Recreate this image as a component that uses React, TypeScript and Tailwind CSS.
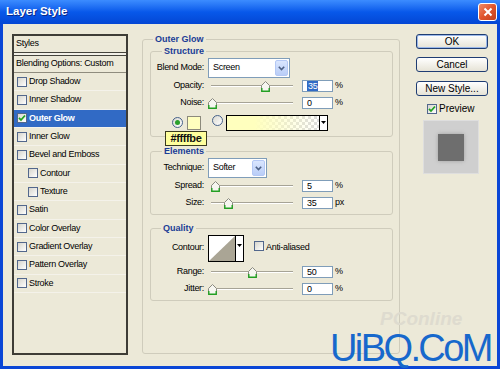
import React from "react";

const CheckMark = () => (
  <svg width="8" height="8" viewBox="0 0 8 8">
    <path d="M1 3.8 L3 6 L7 1.5" fill="none" stroke="#21a121" strokeWidth="1.8" />
  </svg>
);

function Box({ checked }: { checked?: boolean }) {
  return (
    <span className="inline-flex items-center justify-center w-[10px] h-[10px] border border-[#52678c] bg-linear-to-br from-[#d6d5cd] to-white shrink-0">
      {checked && <CheckMark />}
    </span>
  );
}

function Radio({ checked }: { checked?: boolean }) {
  return (
    <span className="inline-flex items-center justify-center w-[11px] h-[11px] rounded-full border border-[#46628a] bg-linear-to-br from-[#d9d8d0] to-white shrink-0">
      {checked && <span className="w-[5px] h-[5px] rounded-full bg-[#2aa02a]" />}
    </span>
  );
}

function Thumb() {
  return (
    <svg width="9" height="11" viewBox="0 0 9 11">
      <path d="M0.5 4.5 L4.5 0.5 L8.5 4.5 L8.5 10.5 L0.5 10.5 Z" fill="#f6f6f0" stroke="#8a8a80" />
      <path d="M0.8 7 L0.8 10.2 L8.2 10.2 L8.2 7" fill="none" stroke="#22a022" strokeWidth="1.4" />
    </svg>
  );
}

function Slider({ at }: { at: number }) {
  return (
    <div className="relative w-[82px] h-[12px] ml-[7px] shrink-0">
      <div className="absolute left-0 right-0 top-[5px] h-[2px] border-t border-[#a6a396] border-b border-b-white" />
      <div className="absolute top-[1px]" style={{ left: at - 4.5 }}>
        <Thumb />
      </div>
    </div>
  );
}

function Input({ value, selected }: { value: string; selected?: boolean }) {
  return (
    <div className="w-[31px] h-[12px] ml-[9px] bg-white border border-[#7f9db9] flex items-center pl-[4px] text-[9px] leading-[10px] shrink-0">
      {selected ? <span className="bg-[#316ac5] text-white px-[1px]">{value}</span> : value}
    </div>
  );
}

function Arrow() {
  return (
    <div className="w-[13px] h-[16px] mr-[1px] rounded-[2px] border border-[#b4c8f5] bg-linear-to-b from-[#dae6fe] to-[#b9cdf7] flex items-center justify-center shrink-0">
      <svg width="7" height="5" viewBox="0 0 7 5">
        <path d="M0.8 0.8 L3.5 3.6 L6.2 0.8" fill="none" stroke="#4d6185" strokeWidth="1.6" />
      </svg>
    </div>
  );
}

function Select({ text, wide }: { text: string; wide?: boolean }) {
  return (
    <div
      className={`ml-[4px] h-[20px] bg-white border border-[#7f9db9] flex items-center shrink-0 ${
        wide ? "w-[82px]" : "w-[59px]"
      }`}
    >
      <span className="flex-1 pl-[4px] text-[9px]">{text}</span>
      <Arrow />
    </div>
  );
}

function Label({ children }: { children: React.ReactNode }) {
  return <span className="w-[53px] text-right shrink-0">{children}</span>;
}

function SliderRow({
  label,
  at,
  value,
  unit,
  selected,
  mt,
}: {
  label: string;
  at: number;
  value: string;
  unit: string;
  selected?: boolean;
  mt: string;
}) {
  return (
    <div className={`flex items-center h-[12px] ${mt}`}>
      <Label>{label}</Label>
      <Slider at={at} />
      <Input value={value} selected={selected} />
      <span className="ml-[2px]">{unit}</span>
    </div>
  );
}

const items: { label: string; active?: boolean; indent?: boolean }[] = [
  { label: "Drop Shadow" },
  { label: "Inner Shadow" },
  { label: "Outer Glow", active: true },
  { label: "Inner Glow" },
  { label: "Bevel and Emboss" },
  { label: "Contour", indent: true },
  { label: "Texture", indent: true },
  { label: "Satin" },
  { label: "Color Overlay" },
  { label: "Gradient Overlay" },
  { label: "Pattern Overlay" },
  { label: "Stroke" },
];

export default function App() {
  return (
    <div className="w-[500px] h-[369px] bg-[#0a46d6] flex flex-col overflow-hidden relative font-['Liberation_Sans',Arial,sans-serif] text-[9px] tracking-[-0.3px] text-black">
      {/* Title bar */}
      <div className="h-[24px] shrink-0 flex items-center bg-linear-to-b from-[#3c8cff] via-[#0858ea] to-[#0446d4] pl-[6px] pr-[3px]">
        <span className="text-white font-bold text-[11.5px] tracking-normal [text-shadow:1px_1px_0_#0a2a8a] flex-1">
          Layer Style
        </span>
        <div className="w-[19px] h-[18px] rounded-[3px] border border-white bg-linear-to-br from-[#f08a66] via-[#e0552c] to-[#c2401e] flex items-center justify-center">
          <svg width="10" height="10" viewBox="0 0 10 10">
            <path d="M1.5 1.5 L8.5 8.5 M8.5 1.5 L1.5 8.5" stroke="white" strokeWidth="2" />
          </svg>
        </div>
      </div>

      {/* Body */}
      <div className="flex-1 mx-[3px] mb-[3px] bg-[#ece9d8] flex pl-[9px] pt-[9px]">
        {/* Styles list */}
        <div className="w-[116px] h-[321px] mt-[1px] border-2 border-[#3e3d37] bg-[#ece9d8] flex flex-col shrink-0">
          <div className="h-[16px] flex items-center pl-[2px] shrink-0">Styles</div>
          <div className="h-[4px] border-y border-[#45443c] bg-[#f3f1e8] shrink-0" />
          <div className="h-[16px] flex items-center pl-[2px] border-b border-[#8f8c7e] box-content shrink-0">
            Blending Options: Custom
          </div>
          {items.map((it) => (
            <div
              key={it.label}
              className={`h-[18.33px] shrink-0 flex items-center gap-[1px] border-b border-[#f4f2ea] ${
                it.indent ? "pl-[14px]" : "pl-[3px]"
              } ${it.active ? "bg-[#316ac5] text-white font-bold" : ""}`}
            >
              <Box checked={it.active} />
              <span className="ml-[1px]">{it.label}</span>
            </div>
          ))}
        </div>

        {/* Main panel */}
        <fieldset className="ml-[14px] w-[258px] h-[321px] border border-[#cfccbc] rounded-[3px] pl-[7px] pr-[6px] shrink-0">
          <legend className="ml-[3px] px-[2px] text-[9px] leading-[12px] font-bold tracking-normal text-[#1a3c96]">
            Outer Glow
          </legend>

          {/* Structure */}
          <fieldset className="relative border border-[#cfccbc] rounded-[3px] pb-[5px]">
            <legend className="ml-[11px] px-[2px] leading-[12px] font-bold tracking-normal text-[#1a3c96]">
              Structure
            </legend>
            <div className="flex items-center h-[20px] mt-[1px]">
              <Label>Blend Mode:</Label>
              <Select text="Screen" wide />
            </div>
            <SliderRow label="Opacity:" at={54} value="35" unit="%" selected mt="mt-[2px]" />
            <SliderRow label="Noise:" at={1} value="0" unit="%" mt="mt-[5px]" />
            <div className="relative flex items-center h-[16px] mt-[6px]">
              <span className="ml-[21px]">
                <Radio checked />
              </span>
              <span className="ml-[4px] w-[14px] h-[14px] border border-[#8c8a7c] bg-[#ffffbe] shrink-0" />
              <span className="ml-[11px]">
                <Radio />
              </span>
              <div className="ml-[3px] w-[102px] h-[16px] border border-black flex shrink-0">
                <div className="relative flex-1 bg-[repeating-conic-gradient(#dcdcdc_0_25%,#ffffff_0_50%)] bg-[length:6px_6px]">
                  <div className="absolute inset-0 bg-linear-to-r from-[#ffffbe] from-30% to-[#ffffbe]/0" />
                </div>
                <div className="w-[8px] border-l border-black bg-white flex items-start justify-center pt-[5px]">
                  <svg width="5" height="3" viewBox="0 0 5 3">
                    <path d="M0 0 L5 0 L2.5 3 Z" fill="#000" />
                  </svg>
                </div>
              </div>
              {/* tooltip */}
              <div className="absolute left-[14px] top-[16px] w-[42px] h-[15px] bg-[#ffff9c] border border-[#3a3a20] flex items-center justify-center text-[11px] tracking-[-0.4px] font-semibold text-[#111] z-10">
                #ffffbe
              </div>
            </div>
          </fieldset>

          {/* Elements */}
          <fieldset className="mt-[8px] border border-[#cfccbc] rounded-[3px] pb-[5px]">
            <legend className="ml-[11px] px-[2px] leading-[12px] font-bold tracking-normal text-[#1a3c96]">
              Elements
            </legend>
            <div className="flex items-center h-[20px] mt-[1px]">
              <Label>Technique:</Label>
              <Select text="Softer" />
            </div>
            <SliderRow label="Spread:" at={4} value="5" unit="%" mt="mt-[2px]" />
            <SliderRow label="Size:" at={17} value="35" unit="px" mt="mt-[5px]" />
          </fieldset>

          {/* Quality */}
          <fieldset className="mt-[7px] border border-[#cfccbc] rounded-[3px] pb-[5px]">
            <legend className="ml-[10px] px-[2px] leading-[12px] font-bold tracking-normal text-[#1a3c96]">
              Quality
            </legend>
            <div className="flex items-center h-[28px]">
              <Label>Contour:</Label>
              <div className="ml-[4px] w-[36px] h-[27px] border border-black flex bg-white shrink-0">
                <svg className="flex-1" width="26" height="25" viewBox="0 0 26 25" preserveAspectRatio="none">
                  <rect width="26" height="25" fill="#ffffff" />
                  <path d="M0 25 L26 0 L26 25 Z" fill="#aaa595" />
                </svg>
                <div className="w-[8px] border-l border-black bg-white flex items-start justify-center pt-[8px] shrink-0">
                  <svg width="5" height="3" viewBox="0 0 5 3">
                    <path d="M0 0 L5 0 L2.5 3 Z" fill="#000" />
                  </svg>
                </div>
              </div>
              <span className="ml-[10px]">
                <Box />
              </span>
              <span className="ml-[2px]">Anti-aliased</span>
            </div>
            <SliderRow label="Range:" at={41} value="50" unit="%" mt="mt-[4px]" />
            <SliderRow label="Jitter:" at={1} value="0" unit="%" mt="mt-[5px]" />
          </fieldset>
        </fieldset>

        {/* Right column */}
        <div className="ml-[16px] mt-[1px] w-[72px] flex flex-col shrink-0 text-[10px] tracking-normal">
          <div className="h-[15px] rounded-[3px] border border-[#1f3d73] bg-linear-to-b from-white to-[#e6e3d6] shadow-[inset_0_0_0_1px_#9bb8ea] flex items-center justify-center">
            OK
          </div>
          <div className="mt-[8px] h-[15px] rounded-[3px] border border-[#1f3d73] bg-linear-to-b from-white to-[#e6e3d6] flex items-center justify-center">
            Cancel
          </div>
          <div className="mt-[9px] h-[15px] rounded-[3px] border border-[#1f3d73] bg-linear-to-b from-white to-[#e6e3d6] flex items-center justify-center">
            New Style...
          </div>
          <div className="mt-[7px] h-[11px] flex items-center pl-[11px]">
            <Box checked />
            <span className="ml-[2px]">Preview</span>
          </div>
          <div className="mt-[6px] ml-[7px] w-[56px] h-[54px] bg-[#cfcfcf] border border-[#dedede] flex items-center justify-center">
            <div className="w-[26px] h-[27px] bg-[#6e6e6e] shadow-[0_0_4px_#a0a0a0]" />
          </div>
        </div>
      </div>

      {/* watermark */}
      <div className="absolute left-[380px] top-[311px] text-[19px] leading-[16px] italic font-bold tracking-normal text-[#dedbcf]">
        PConline
      </div>
      <div className="absolute left-[330px] top-[333px] text-[38px] leading-[30px] tracking-[-2.6px] text-[#1768cc] font-['Liberation_Sans',Arial,sans-serif]">
        UiBQ.CoM
      </div>
    </div>
  );
}
